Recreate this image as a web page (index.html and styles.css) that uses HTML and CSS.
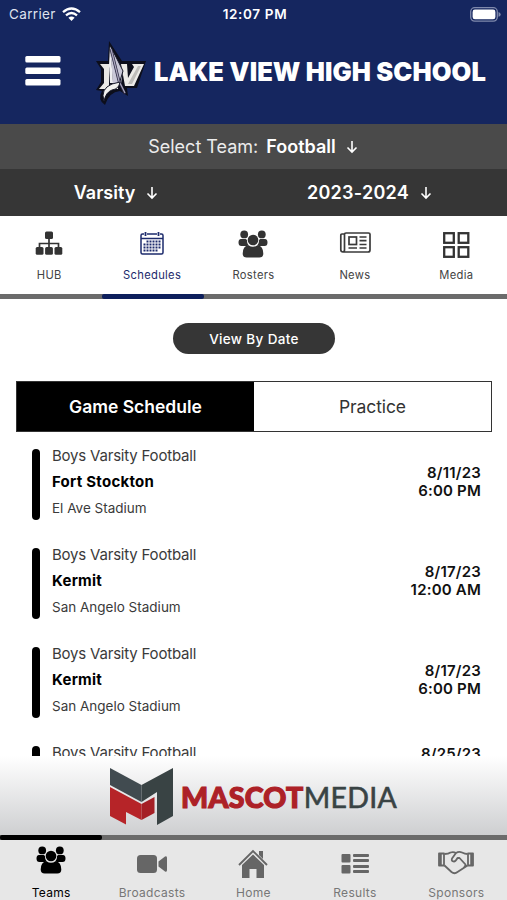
FILE: index.html
```html
<!DOCTYPE html>
<html lang="en">
<head>
<meta charset="utf-8">
<title>Lake View High School</title>
<link rel="stylesheet" href="styles.css">
</head>
<body>
<svg class="defs" width="0" height="0" aria-hidden="true">
  <defs>
    <symbol id="arrow" viewBox="0 0 12 14"><path d="M6 1v11M1.500 7.500L6 12l4.500-4.500" fill="none" stroke="currentColor" stroke-width="1.600"/></symbol>
    <symbol id="people" viewBox="0 0 30 28">
      <g fill="currentColor">
        <circle cx="6.200" cy="4.400" r="3.900"/><circle cx="23.800" cy="4.400" r="3.900"/>
        <path d="M3 9h4c1 0 2 .5 2 1.500 0 2 .6 3.500 1.800 5L9 16H3.500Q.5 16 .5 12.500 .5 9 3 9zM27 9h-4c-1 0-2 .5-2 1.500 0 2-.6 3.500-1.800 5l1.800.5h5.500q3 0 3-3.500Q29.500 9 27 9z"/>
        <circle cx="15" cy="10" r="5.300"/>
        <path d="M10.500 15.200q4.500 3 9 0 5.800.8 5.800 8.300 0 4-4 4H8.700q-4 0-4-4 0-7.500 5.800-8.300z"/>
      </g>
    </symbol>
  </defs>
</svg>
<div class="app">
  <header class="header">
    <div class="status">
      <div class="carrier"><span>Carrier</span>
        <svg width="19" height="14" viewBox="0 0 19 14"><g fill="none" stroke="#fff" stroke-width="2.300"><path d="M1 5.200Q9.500-2.300 18 5.200"/><path d="M4 8.400q5.500-4.800 11 0"/></g><path d="M6.400 10.800q3.100-2.500 6.200 0L9.500 14z" fill="#fff"/></svg>
      </div>
      <span class="clock">12:07 PM</span>
      <svg class="battery" width="31" height="15" viewBox="0 0 31 15"><rect x=".7" y=".7" width="26.600" height="13.400" rx="4" fill="none" stroke="#7f89ac" stroke-width="1.300"/><rect x="2.600" y="2.600" width="22.800" height="9.600" rx="2.300" fill="#fff"/><path d="M28.500 5q2.200.8 2.200 2.400t-2.200 2.400z" fill="#7f89ac"/></svg>
    </div>
    <div class="brand">
      <svg class="menu" width="36" height="30" viewBox="0 0 36 30" fill="#fff"><rect x=".3" y="0" width="35.200" height="6.500" rx="1.500"/><rect x=".3" y="11.500" width="35.200" height="6.500" rx="1.500"/><rect x=".3" y="23" width="35.200" height="6.500" rx="1.500"/></svg>
      <svg class="crest" width="50" height="64" viewBox="0 0 50 64">
        <path d="M13 0L26 20H50L41 47H31l1 8-8-5q-11 1-15 14-8-5-3-14L0 49l5-8V28L0 20h12z" fill="#0c0e1b"/>
        <path d="M4 23h11l-2 4v17h9v4H3l5-6V28z" fill="#e9e8e5"/>
        <path d="M25 23h6l1 14 6-11-2-3h12L38 45h-9z" fill="#ecebe8"/>
        <path d="M42 25h3l-9 18h-4z" fill="#bdbcb9"/>
        <path d="M14 5l13 24-2 14h-8z" fill="#c9c8d8"/>
        <path d="M14 5l2 23 1 14h-3l-1-18z" fill="#eeeef1"/>
        <path d="M14 4l13 26-3 10" fill="none" stroke="#101222" stroke-width="1"/>
        <path d="M15 8l8 32 6 13" fill="none" stroke="#25243c" stroke-width="2.800"/>
        <path d="M15 8l8 32 6 12" fill="none" stroke="#a9a5bd" stroke-width="1.300"/>
        <path d="M8 60q-4-12 8-17l8-2q-1 7-8 8-6 2-8 11z" fill="#f2f2ef" stroke="#151727"/>
      </svg>
      <h1 class="school">LAKE VIEW HIGH SCHOOL</h1>
    </div>
  </header>
  <div class="team"><span class="team-label">Select Team:</span><b>Football</b><svg class="arrow"><use href="#arrow"/></svg></div>
  <div class="filters">
    <div class="filter"><b class="level">Varsity</b><svg class="arrow"><use href="#arrow"/></svg></div>
    <div class="filter"><b class="season">2023-2024</b><svg class="arrow"><use href="#arrow"/></svg></div>
  </div>
  <nav class="tabs">
    <a class="tab hub"><svg width="28" height="28" viewBox="0 0 28 28" fill="#333"><rect x="10" y="1.500" width="8" height="7.500" rx="1.500"/><path d="M14 8v10M4.500 18v-4.500h19V18" fill="none" stroke="#333" stroke-width="1.700"/><rect x=".7" y="17" width="7.800" height="7.800" rx="1.500"/><rect x="10.100" y="17" width="7.800" height="7.800" rx="1.500"/><rect x="19.500" y="17" width="7.800" height="7.800" rx="1.500"/></svg><span>HUB</span></a>
    <a class="tab current"><svg width="26" height="28" viewBox="0 0 26 28" fill="none" stroke="#1d2b6c"><path d="M5 4H3.500Q2 4 2 5.500v17Q2 24 3.500 24h19q1.500 0 1.500-1.500v-17Q24 4 22.500 4H21M8 4h10M2 8.500h22" stroke-width="1.500"/><path d="M6.500 2v4M19.500 2v4" stroke-width="1.800"/><path d="M7.500 11.500H22M4.500 14.500H22M4.500 17.500H22M4.500 20.500h14" stroke-width="2" stroke-dasharray="2 1"/></svg><span>Schedules</span></a>
    <a class="tab"><svg class="roster" width="30" height="28"><use href="#people"/></svg><span>Rosters</span></a>
    <a class="tab"><svg width="32" height="28" viewBox="0 0 32 28" fill="none" stroke="#3a3a3a" stroke-width="1.700"><path d="M5 4H3Q1.800 4 1.800 5.500v14.300Q1.800 22 4 22h25Q31 22 31 20V4.300Q31 3 29.500 3H7Q5.500 3 5.500 4.500V20Q5.500 22 3.700 22"/><rect x="10" y="7" width="7.500" height="7.500"/><path d="M20.500 7h7M20.500 10.700h7M20.500 14.500h7M9.500 18H18M20.500 18h7"/></svg><span>News</span></a>
    <a class="tab"><svg width="28" height="28" viewBox="0 0 28 28" fill="none" stroke="#333" stroke-width="2.300"><rect x="2.200" y="3.200" width="9.600" height="9.600"/><rect x="16.700" y="3.200" width="9.600" height="9.600"/><rect x="2.200" y="17.200" width="9.600" height="9.600"/><rect x="16.700" y="17.200" width="9.600" height="9.600"/></svg><span>Media</span></a>
  </nav>
  <div class="track"><i class="thumb second"></i></div>
  <main class="content">
    <button class="by-date">View By Date</button>
    <div class="segments"><div class="segment on">Game Schedule</div><div class="segment">Practice</div></div>
    <section class="games">
      <article class="game"><i class="mark"></i><div class="info"><span class="squad">Boys Varsity Football</span><b class="opponent">Fort Stockton</b><span class="venue">El Ave Stadium</span></div><div class="when"><span>8/11/23</span><span>6:00 PM</span></div></article>
      <article class="game"><i class="mark"></i><div class="info"><span class="squad">Boys Varsity Football</span><b class="opponent">Kermit</b><span class="venue">San Angelo Stadium</span></div><div class="when"><span>8/17/23</span><span>12:00 AM</span></div></article>
      <article class="game"><i class="mark"></i><div class="info"><span class="squad">Boys Varsity Football</span><b class="opponent">Kermit</b><span class="venue">San Angelo Stadium</span></div><div class="when"><span>8/17/23</span><span>6:00 PM</span></div></article>
      <article class="game"><i class="mark"></i><div class="info"><span class="squad">Boys Varsity Football</span></div><div class="when next"><span>8/25/23</span></div></article>
    </section>
  </main>
  <aside class="sponsor">
    <svg width="64" height="58" viewBox="0 0 64 58"><path d="M0 0l31.500 17v17L0 17z" fill="#414b50"/><path d="M31.500 17L63 0v48L47 57V24L31.500 34z" fill="#394344"/><path d="M0 19l31.500 17v16L16 44v12.500L0 48z" fill="#b62428"/><path d="M31.500 36L44.500 29v16l-13 7z" fill="#a51f25"/></svg>
    <div class="wordmark"><b>MASCOT</b><span>MEDIA</span></div>
  </aside>
  <div class="track"><i class="thumb first"></i></div>
  <footer class="bottom">
    <a class="dest active"><svg class="crowd" width="30" height="28"><use href="#people"/></svg><span>Teams</span></a>
    <a class="dest"><svg width="32" height="28" viewBox="0 0 32 28" fill="#666"><rect x="1" y="7" width="20" height="18" rx="3.500"/><path d="M22.500 13.500L29 8.500q2-1 2 1.500v12q0 2.500-2 1.500l-6.500-5z"/></svg><span>Broadcasts</span></a>
    <a class="dest"><svg class="house" width="32" height="30" viewBox="0 0 32 30"><path d="M2 17L16 3l14 14" fill="none" stroke="#666" stroke-width="1.900"/><path d="M22 3h4v8l-4-4zM16 6.500L27 17v13h-7.500v-9h-7v9H5V17z" fill="#666"/></svg><span>Home</span></a>
    <a class="dest"><svg width="30" height="28" viewBox="0 0 30 28" fill="#666"><rect x="1.500" y="6" width="9" height="8.500" rx="1"/><rect x="1.500" y="17" width="9" height="8.500" rx="1"/><rect x="13" y="6" width="16" height="3" rx="1"/><rect x="13" y="11" width="16" height="3" rx="1"/><rect x="13" y="17" width="16" height="3" rx="1"/><rect x="13" y="22" width="16" height="3" rx="1"/></svg><span>Results</span></a>
    <a class="dest"><svg width="36" height="28" viewBox="0 0 36 28" fill="none" stroke="#666" stroke-width="1.800" stroke-linejoin="round"><g transform="translate(0 1.500)"><path d="M6.500 4.500q4 0 6-1.500 3-1 5.500.5Q21 1.500 24 3q3 1.500 5.500 1.500M6.500 16l7 6.500q3 2.500 6 0L29.500 16M18 3.500l-4 5.500q-1 3 2 3 1.500 0 3.500-3.500h2l6 6.500q0 2-2 3.500"/><path d="M1 4h5v12H1zM30 4h5v12h-5z"/><path d="M2.500 4v12M33.500 4v12" stroke-width="2.500"/></g></svg><span>Sponsors</span></a>
  </footer>
</div>
</body>
</html>
```
FILE: styles.css
```css
* { box-sizing: border-box; }
body { margin: 0; background: #fff; font-family: Inter, "Liberation Sans", sans-serif; color: #111; }
svg { display: block; flex: none; }
.defs { position: absolute; }
.app { display: flex; flex-direction: column; width: 507px; height: 900px; overflow: hidden; }

.header { flex: none; height: 124px; background: #15265f; color: #fff; }
.status { display: grid; grid-template-columns: 1fr auto 1fr; align-items: center; height: 28px; padding: 0 6px 0 9px; font-size: 13.500px; }
.carrier { display: flex; align-items: center; gap: 6px; color: #dfe2ee; letter-spacing: .35px; }
.clock { font-weight: 600; font-size: 13.500px; letter-spacing: .65px; }
.battery { justify-self: end; }
.brand { display: flex; align-items: center; height: 85px; padding-left: 25px; }
.crest { margin: 5px 0 0 35px; }
.school { margin: 1px 0 0 8px; font-size: 25.500px; font-weight: 900; white-space: nowrap; letter-spacing: .1px; }

.team { flex: none; height: 45px; display: flex; align-items: center; justify-content: center; background: #4a4a4a; color: #fff; font-size: 18px; }
.team-label { color: #ececec; margin-right: 8px; }
.team b, .filter b { font-weight: 600; }
.arrow { width: 12px; height: 14px; margin-left: 11px; color: #fff; }
.team .arrow { margin-left: 10px; margin-right: 1px; }
.filters { flex: none; height: 47px; display: grid; grid-template-columns: 232px 275px; background: #363636; color: #fff; font-size: 18px; }
.filter { display: flex; align-items: center; justify-content: center; }
.season { letter-spacing: .25px; }

.tabs { flex: none; height: 78px; display: grid; grid-template-columns: repeat(5, 1fr); padding: 14px 0 0; }
.tab, .dest { display: flex; flex-direction: column; align-items: center; font-size: 11.200px; color: #444; letter-spacing: .3px; }
.tab span { margin-top: 10px; line-height: 14px; }
.hub { padding-right: 3px; }
.current { color: #1d2b6c; }
.roster { color: #333; }
.track { flex: none; height: 5px; background: #6b6b6b; }
.thumb { display: block; width: 102px; height: 5px; border-radius: 2px; background: #000; }
.second { margin-left: 102px; background: #0d1f5c; }

.content { flex: none; height: 457px; overflow: hidden; padding: 24px 15px 0 16px; }
.by-date { display: block; width: 162px; height: 31px; margin: 0 auto; padding: 0; border: 0; border-radius: 16px; background: #363636; color: #fff; font: 500 13.500px Inter, sans-serif; letter-spacing: .35px; }
.segments { display: grid; grid-template-columns: 1fr 1fr; height: 51px; margin-top: 27px; border: 1px solid #333; }
.segment { display: flex; align-items: center; justify-content: center; font-size: 17.500px; letter-spacing: -.1px; color: #333; }
.on { background: #000; color: #fff; font-weight: 600; letter-spacing: 0; }
.games { padding: 11px 11px 0 16px; }
.game { display: flex; height: 99px; }
.mark { width: 8px; height: 71px; margin-top: 6px; border-radius: 4px; background: #000; }
.info { display: flex; flex-direction: column; margin-left: 12px; line-height: 26px; }
.squad { font-size: 15px; letter-spacing: -.2px; color: #3a3a3a; }
.opponent { font-size: 15px; font-weight: 700; letter-spacing: .25px; color: #000; }
.venue { font-size: 13.500px; color: #3a3a3a; }
.when { display: flex; flex-direction: column; align-items: flex-end; margin: 21px 0 0 auto; font-size: 15px; font-weight: 600; line-height: 18px; letter-spacing: .2px; }
.next { margin-top: 5px; }

.sponsor { flex: none; height: 79px; display: flex; align-items: center; justify-content: center; gap: 7px; padding-top: 2px; background: linear-gradient(#fff, #cecfd1); }
.wordmark { display: flex; font-family: Lato, sans-serif; font-size: 28.500px; line-height: 36px; color: #394344; }
.wordmark b { font-weight: 900; color: #ad2127; letter-spacing: .3px; -webkit-text-stroke: 1.200px #ad2127; }
.wordmark span { letter-spacing: .3px; -webkit-text-stroke: .6px #394344; }
.bottom { flex: none; height: 60px; display: grid; grid-template-columns: repeat(5, 1fr); padding-top: 8px; background: #e7e7e7; }
.dest { font-size: 12px; color: #777; }
.dest span { margin-top: 9px; line-height: 15px; }
.dest.active { color: #000; padding-left: 1px; }
.crowd { margin: -2px 0 2px; }
.house { margin-bottom: -2px; }
```
